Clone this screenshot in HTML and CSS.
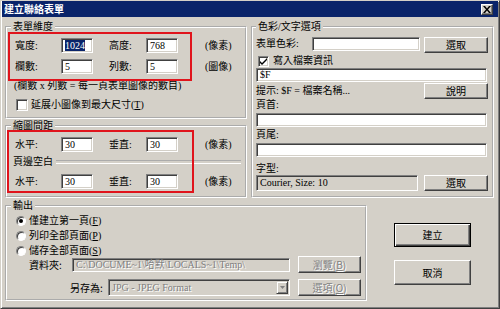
FILE: index.html
```html
<!DOCTYPE html>
<html lang="zh-Hant">
<head>
  <meta charset="UTF-8" />
  <title>建立聯絡表單</title>
  <link rel="stylesheet" href="styles.css">
</head>
<body>
  <div class="dialog">
    <div class="titlebar">
      <span class="title">建立聯絡表單</span>
      <span class="close-btn">
        <svg width="8" height="7" viewBox="0 0 8 7"><path d="M0 0h2l2 2.5L6 0h2L5 3.5 8 7H6L4 4.5 2 7H0l3-3.5z" fill="#000"/></svg>
      </span>
    </div>

    <div class="content">
      <div class="top">
        <div class="left-col">
          <fieldset class="group dims">
            <legend>表單維度</legend>
            <div class="row">
              <span class="lbl-a">寬度:</span>
              <span class="edit num"><span class="sel">1024</span></span>
              <span class="lbl-b">高度:</span>
              <span class="edit num">768</span>
              <span class="unit">(像素)</span>
            </div>
            <div class="row">
              <span class="lbl-a">欄數:</span>
              <span class="edit num">5</span>
              <span class="lbl-b">列數:</span>
              <span class="edit num">5</span>
              <span class="unit">(圖像)</span>
            </div>
            <div class="hint">(欄數 x 列數 = 每一頁表單圖像的數目)</div>
            <div class="check-row stretch">
              <span class="checkbox"></span>
              <span>延展小圖像到最大尺寸(<u>T</u>)</span>
            </div>
          </fieldset>

          <fieldset class="group spacing">
            <legend>縮圖間距</legend>
            <div class="row">
              <span class="lbl-a">水平:</span>
              <span class="edit num">30</span>
              <span class="lbl-b">垂直:</span>
              <span class="edit num">30</span>
              <span class="unit">(像素)</span>
            </div>
            <div class="subhead"><span>頁邊空白</span></div>
            <div class="row">
              <span class="lbl-a">水平:</span>
              <span class="edit num">30</span>
              <span class="lbl-b">垂直:</span>
              <span class="edit num">30</span>
              <span class="unit">(像素)</span>
            </div>
          </fieldset>
        </div>

        <fieldset class="group options">
          <legend>色彩/文字選項</legend>
          <div class="opt-row color-row">
            <span class="lbl-color">表單色彩:</span>
            <span class="edit color-edit"></span>
            <span class="btn small">選取</span>
          </div>
          <div class="check-row info">
            <span class="checkbox checked">
              <svg width="7" height="7" viewBox="0 0 7 7"><path d="M0 3l2 2 5-5v2L2 7 0 5z" fill="#000"/></svg>
            </span>
            <span>寫入檔案資訊</span>
          </div>
          <div class="edit wide">$F</div>
          <div class="opt-row tip-row">
            <span>提示: $F = 檔案名稱...</span>
            <span class="btn small">說明</span>
          </div>
          <div class="field-lbl">頁首:</div>
          <div class="edit wide"></div>
          <div class="field-lbl">頁尾:</div>
          <div class="edit wide"></div>
          <div class="field-lbl font-lbl">字型:</div>
          <div class="opt-row font-row">
            <span class="edit font-box">Courier, Size: 10</span>
            <span class="btn small">選取</span>
          </div>
        </fieldset>
      </div>

      <div class="bottom">
        <fieldset class="group output">
          <legend>輸出</legend>
          <div class="radio-row"><span class="radio on"></span><span>僅建立第一頁(<u>F</u>)</span></div>
          <div class="radio-row"><span class="radio"></span><span>列印全部頁面(<u>P</u>)</span></div>
          <div class="radio-row"><span class="radio"></span><span>儲存全部頁面(<u>S</u>)</span></div>
          <div class="path-row folder">
            <span class="path-lbl">資料夾:</span>
            <span class="edit disabled path-edit">C:\DOCUME~1\哈默\LOCALS~1\Temp\</span>
            <span class="btn disabled-btn">瀏覽(<u>B</u>)</span>
          </div>
          <div class="path-row saveas">
            <span class="path-lbl">另存為:</span>
            <span class="edit disabled combo">
              <span class="combo-text">JPG - JPEG Format</span>
              <span class="combo-arrow">
                <svg width="5" height="3" viewBox="0 0 5 3"><path d="M0 0h5L2.5 3z" fill="#808080"/></svg>
              </span>
            </span>
            <span class="btn disabled-btn">選項(<u>O</u>)</span>
          </div>
        </fieldset>

        <div class="actions">
          <span class="btn big default">建立</span>
          <span class="btn big">取消</span>
        </div>
      </div>
    </div>

    <div class="mark mark-dims"></div>
    <div class="mark mark-space"></div>
  </div>
</body>
</html>
```

FILE: styles.css
```css
:root {
  --face: #d4d0c8;
  --shadow: #808080;
  --dark: #404040;
  --navy: #0a246a;
  --mark: #e0141c;
}

* {
  box-sizing: border-box;
}

body {
  margin: 0;
  background: #fff;
  color: #000;
  font-family: "Liberation Serif", "Noto Sans CJK TC", serif;
  font-size: 10px;
  line-height: 12px;
}

u {
  text-decoration: underline;
}

.dialog {
  position: relative;
  width: 500px;
  height: 309px;
  background: var(--face);
  border: 1px solid;
  border-color: var(--face) var(--dark) var(--dark) var(--face);
  box-shadow: inset 1px 1px 0 #fff, inset -1px -1px 0 var(--shadow);
  padding: 0 1px;
}

/* title bar */
.titlebar {
  height: 16px;
  background: var(--navy);
  display: flex;
  align-items: center;
  padding-left: 2px;
}

.title {
  color: #fff;
  font-family: "Noto Sans CJK TC", sans-serif;
  font-weight: 700;
  font-size: 10px;
}

.close-btn {
  margin-left: auto;
  margin-right: 5px;
  width: 12px;
  height: 11px;
  display: flex;
  align-items: center;
  justify-content: center;
  background: var(--face);
  border: 1px solid;
  border-color: #fff var(--dark) var(--dark) #fff;
  box-shadow: inset -1px -1px 0 var(--shadow);
}

/* layout */
.content {
  padding: 4px 0 0 3px;
}

.top {
  display: flex;
  gap: 4px;
}

.left-col {
  width: 242px;
  display: flex;
  flex-direction: column;
  gap: 1px;
}

.group {
  margin: 0;
  min-width: 0;
  border: 2px groove #fff;
  padding: 0 4px;
}

.group legend {
  padding: 0 2px;
  line-height: 12px;
}

.dims {
  height: 98px;
  padding-top: 5px;
}

.spacing {
  height: 78px;
  padding-top: 5px;
}

.options {
  width: 243px;
  height: 177px;
  padding: 4px 4px 0 1px;
}

/* edits */
.edit {
  display: block;
  height: 15px;
  background: #fff;
  border: 1px solid;
  border-color: var(--shadow) #fff #fff var(--shadow);
  box-shadow: inset 1px 1px 0 var(--dark), inset -1px -1px 0 var(--face);
  padding: 1px 0 0 3px;
  white-space: nowrap;
  overflow: hidden;
}

.edit.disabled {
  background: var(--face);
  color: var(--shadow);
  text-shadow: 1px 1px 0 #fff;
}

.sel {
  background: var(--navy);
  color: #fff;
}

/* dimension rows */
.row {
  display: flex;
  align-items: center;
  height: 15px;
  padding-left: 4px;
}

.row + .row {
  margin-top: 6px;
}

.lbl-a {
  width: 46px;
}

.lbl-b {
  width: 37px;
  margin-left: 16px;
}

.num {
  width: 32px;
}

.unit {
  margin-left: 27px;
}

.hint {
  margin-top: 6px;
  padding-left: 3px;
}

.check-row {
  display: flex;
  align-items: center;
  height: 13px;
}

.stretch {
  margin-top: 6px;
  padding-left: 5px;
  gap: 3px;
}

.checkbox {
  width: 12px;
  height: 12px;
  display: flex;
  align-items: center;
  justify-content: center;
  background: #fff;
  border: 1px solid;
  border-color: var(--shadow) #fff #fff var(--shadow);
  box-shadow: inset 1px 1px 0 var(--dark), inset -1px -1px 0 var(--face);
}

.subhead {
  display: flex;
  align-items: center;
  height: 12px;
  margin-top: 4px;
  margin-bottom: 6px;
  padding-left: 2px;
}

.subhead::after {
  content: "";
  flex: 1;
  height: 2px;
  margin-left: 3px;
  border-top: 1px solid #ababab;
  border-bottom: 1px solid #fff;
}

.spacing .row + .row {
  margin-top: 0;
}

/* options group */
.options > * {
  margin-left: 2px;
}

.opt-row {
  display: flex;
  align-items: flex-start;
  height: 16px;
}

.lbl-color {
  width: 56px;
  line-height: 14px;
}

.color-edit {
  width: 108px;
  height: 14px;
}

.btn {
  display: flex;
  align-items: center;
  justify-content: center;
  background: var(--face);
  border: 1px solid;
  border-color: #fff var(--dark) var(--dark) #fff;
  box-shadow: inset -1px -1px 0 var(--shadow);
  font-family: "Noto Sans CJK TC", sans-serif;
}

.btn.small {
  width: 64px;
  height: 16px;
  margin-left: auto;
}

.info {
  margin-top: 2px;
  height: 12px;
  padding-left: 2px;
  gap: 4px;
}

.info .checkbox {
  width: 11px;
  height: 11px;
}

.wide {
  height: 14px;
  margin-top: 1px;
  width: 231px;
  padding-top: 0;
}

.tip-row {
  margin-top: 1px;
  align-items: center;
}

.field-lbl {
  height: 12px;
}

.field-lbl + .wide {
  margin-top: 2px;
}

.wide + .field-lbl {
  margin-top: 2px;
}

.tip-row + .field-lbl {
  margin-top: 0;
}

.wide + .font-lbl {
  margin-top: 6px;
}

.font-box {
  width: 162px;
  height: 16px;
  background: var(--face);
  padding-top: 1px;
}

/* bottom */
.bottom {
  display: flex;
  margin-top: 2px;
}

.output {
  width: 362px;
  height: 101px;
  padding: 2px 4px 0 4px;
}

.radio-row {
  display: flex;
  align-items: center;
  height: 14px;
  padding-left: 5px;
  gap: 3px;
}

.radio-row + .radio-row {
  margin-top: 1px;
}

.radio {
  width: 10px;
  height: 10px;
  border-radius: 50%;
  background: #fff;
  border: 1px solid;
  border-color: var(--shadow) #fff #fff var(--shadow);
  box-shadow: inset 1px 1px 0 var(--dark);
  display: flex;
  align-items: center;
  justify-content: center;
}

.radio.on::after {
  content: "";
  width: 4px;
  height: 4px;
  border-radius: 50%;
  background: #000;
}

.path-row {
  display: flex;
  align-items: center;
  height: 17px;
}

.folder {
  margin-top: -2px;
}

.saveas {
  margin-top: 6px;
}

.path-lbl {
  font-family: "Noto Sans CJK TC", sans-serif;
}

.folder .path-lbl {
  margin-left: 18px;
  width: 43px;
}

.saveas .path-lbl {
  margin-left: 59px;
  width: 38px;
}

.path-edit {
  width: 218px;
  height: 14px;
  padding-top: 0;
}

.combo {
  width: 182px;
  height: 17px;
  display: flex;
  align-items: center;
  padding: 0 1px 0 3px;
}

.combo-text {
  flex: 1;
}

.combo-arrow {
  width: 12px;
  height: 13px;
  display: flex;
  align-items: center;
  justify-content: center;
  background: var(--face);
  border: 1px solid;
  border-color: var(--face) var(--dark) var(--dark) var(--face);
  box-shadow: inset 1px 1px 0 #fff, inset -1px -1px 0 var(--shadow);
}

.disabled-btn {
  width: 63px;
  height: 17px;
  margin-left: 8px;
  color: var(--shadow);
  text-shadow: 1px 1px 0 #fff;
}

.actions {
  margin-left: 27px;
  padding-top: 23px;
  display: flex;
  flex-direction: column;
  gap: 13px;
}

.btn.big {
  width: 77px;
  height: 25px;
  font-size: 10px;
}

.btn.default {
  height: 24px;
  border: 1px solid #000;
  box-shadow: inset 1px 1px 0 #fff, inset -1px -1px 0 var(--dark), inset -2px -2px 0 var(--shadow);
}

/* red annotation frames drawn over the dialog */
.mark {
  position: absolute;
  border: 2px solid var(--mark);
  pointer-events: none;
}

.mark-dims {
  left: 7px;
  top: 31px;
  width: 184px;
  height: 49px;
}

.mark-space {
  left: 6px;
  top: 129px;
  width: 187px;
  height: 63px;
}
```
